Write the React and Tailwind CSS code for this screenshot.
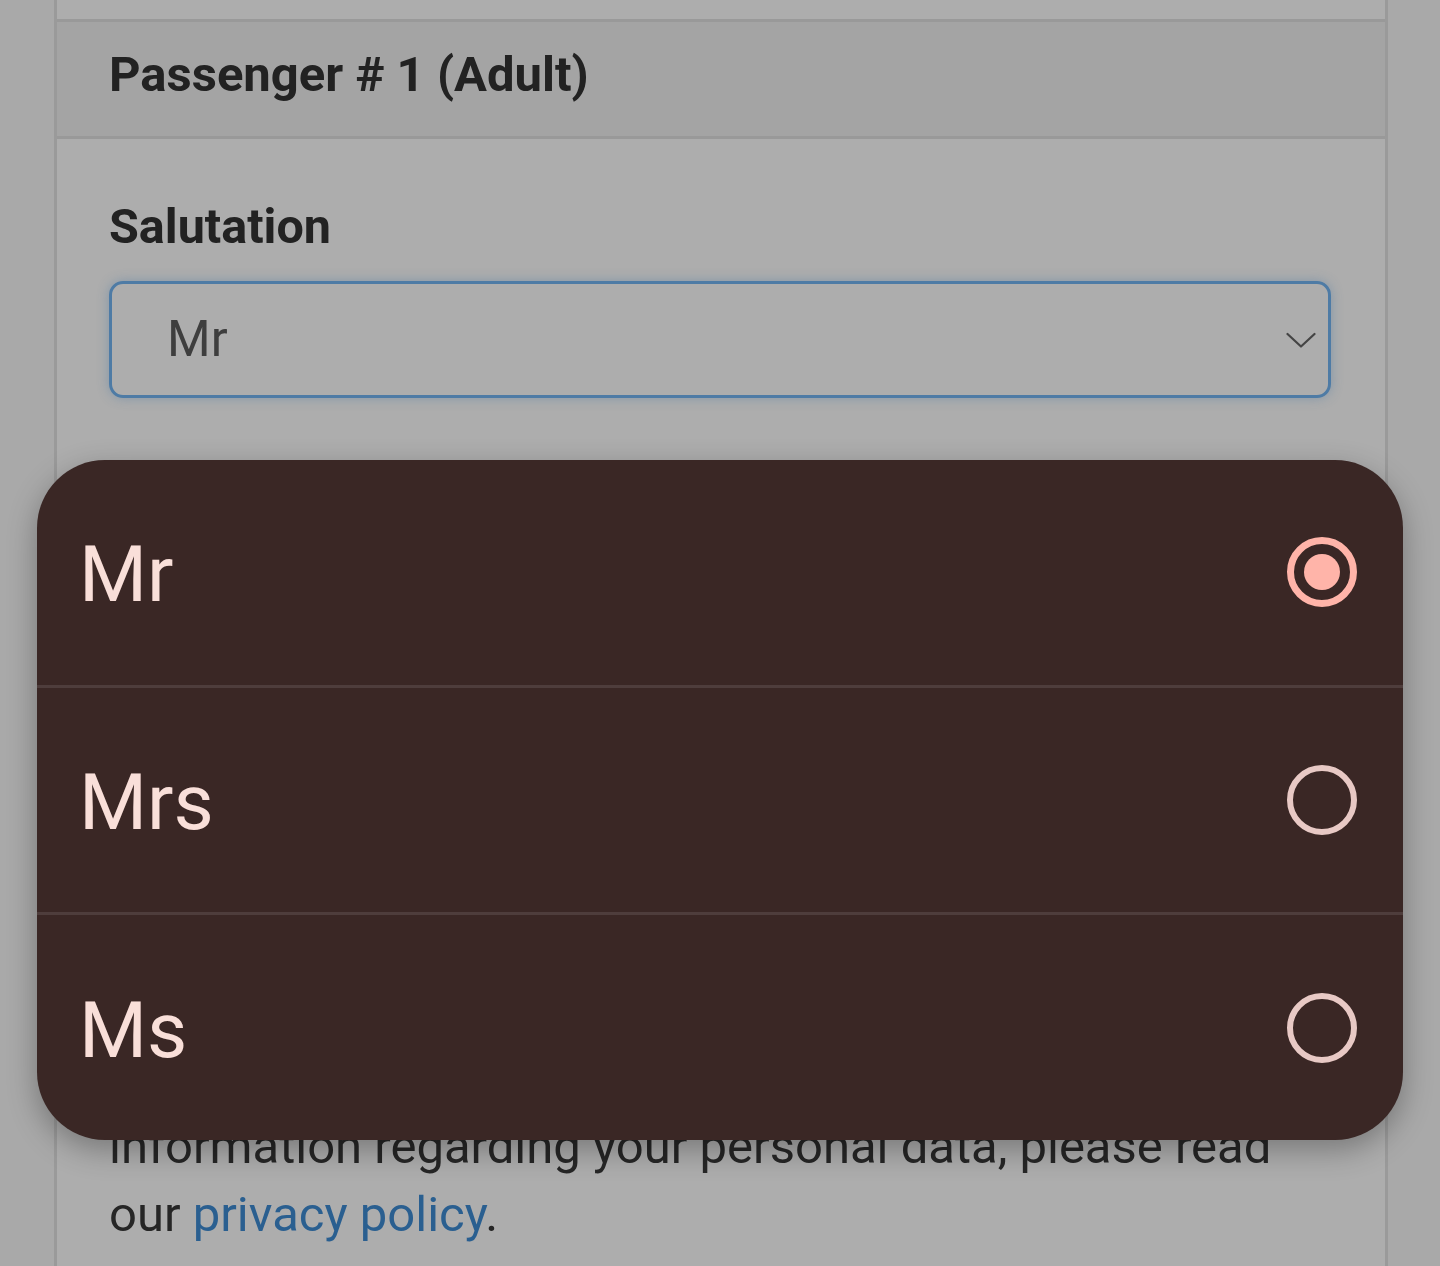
const options = [
  { label: 'Mr', selected: true },
  { label: 'Mrs', selected: false },
  { label: 'Ms', selected: false },
]

function Radio({ selected }) {
  if (selected) {
    return (
      <div className="w-[70px] h-[70px] rounded-full border-[7px] border-[#ffb4a9] flex items-center justify-center">
        <div className="w-[36px] h-[36px] rounded-full bg-[#ffb4a9]" />
      </div>
    )
  }
  return <div className="w-[70px] h-[70px] rounded-full border-[6px] border-[#e8c9c5]" />
}

export default function App() {
  return (
    <div className="relative h-[1266px] w-full overflow-hidden bg-[#a9a9a9] font-['Roboto',sans-serif]">
      <div className="ml-[54px] w-[1334px] h-full border-x-[3px] border-[#9a9a9a] bg-[#adadad]">
        <div className="h-[19px]" />
        <div className="h-[120px] border-y-[3px] border-[#999999] bg-[#a4a4a4] flex items-center px-[52px]">
          <h2 className="text-[49px] font-bold text-[#222222] leading-none pb-[10px]">Passenger # 1 (Adult)</h2>
        </div>

        <div className="px-[52px] pt-[59px]">
          <label className="block text-[48.5px] font-bold leading-[58px] text-[#222222]">Salutation</label>
          <div className="mt-[25px] h-[117px] w-[1222px] rounded-[14px] border-[3px] border-[#4e7ba5] shadow-[0_0_12px_rgba(78,123,165,0.45)] flex items-center justify-between pl-[55px] pr-[12px]">
            <span className="text-[50px] text-[#3e3e3e]">Mr</span>
            <svg width="30" height="18" viewBox="0 0 30 18" fill="none" className="text-[#444444]">
              <path d="M1.5 3 L15 15.5 L28.5 3" stroke="currentColor" strokeWidth="2.2" strokeLinecap="round" strokeLinejoin="round" />
            </svg>
          </div>

          <p className="mt-[715px] text-[49px] leading-[68px] text-[#262626]">
            information regarding your personal data, please read
            <br />
            our <a className="text-[#2a5f90]">privacy policy</a>.
          </p>
        </div>
      </div>

      <div className="absolute left-[37px] top-[460px] w-[1366px] h-[680px] rounded-[68px] bg-[#3a2725] shadow-[0_10px_30px_rgba(0,0,0,0.3)] flex flex-col overflow-hidden">
        {options.map((o, i) => (
          <div
            key={o.label}
            className={`flex-1 flex items-center justify-between pl-[42px] pr-[46px] ${i > 0 ? 'border-t-[3px] border-[#4e3d3c]' : ''}`}
          >
            <span className="text-[78px] text-[#f9dfd9] leading-none pt-[6px]">{o.label}</span>
            <Radio selected={o.selected} />
          </div>
        ))}
      </div>
    </div>
  )
}
